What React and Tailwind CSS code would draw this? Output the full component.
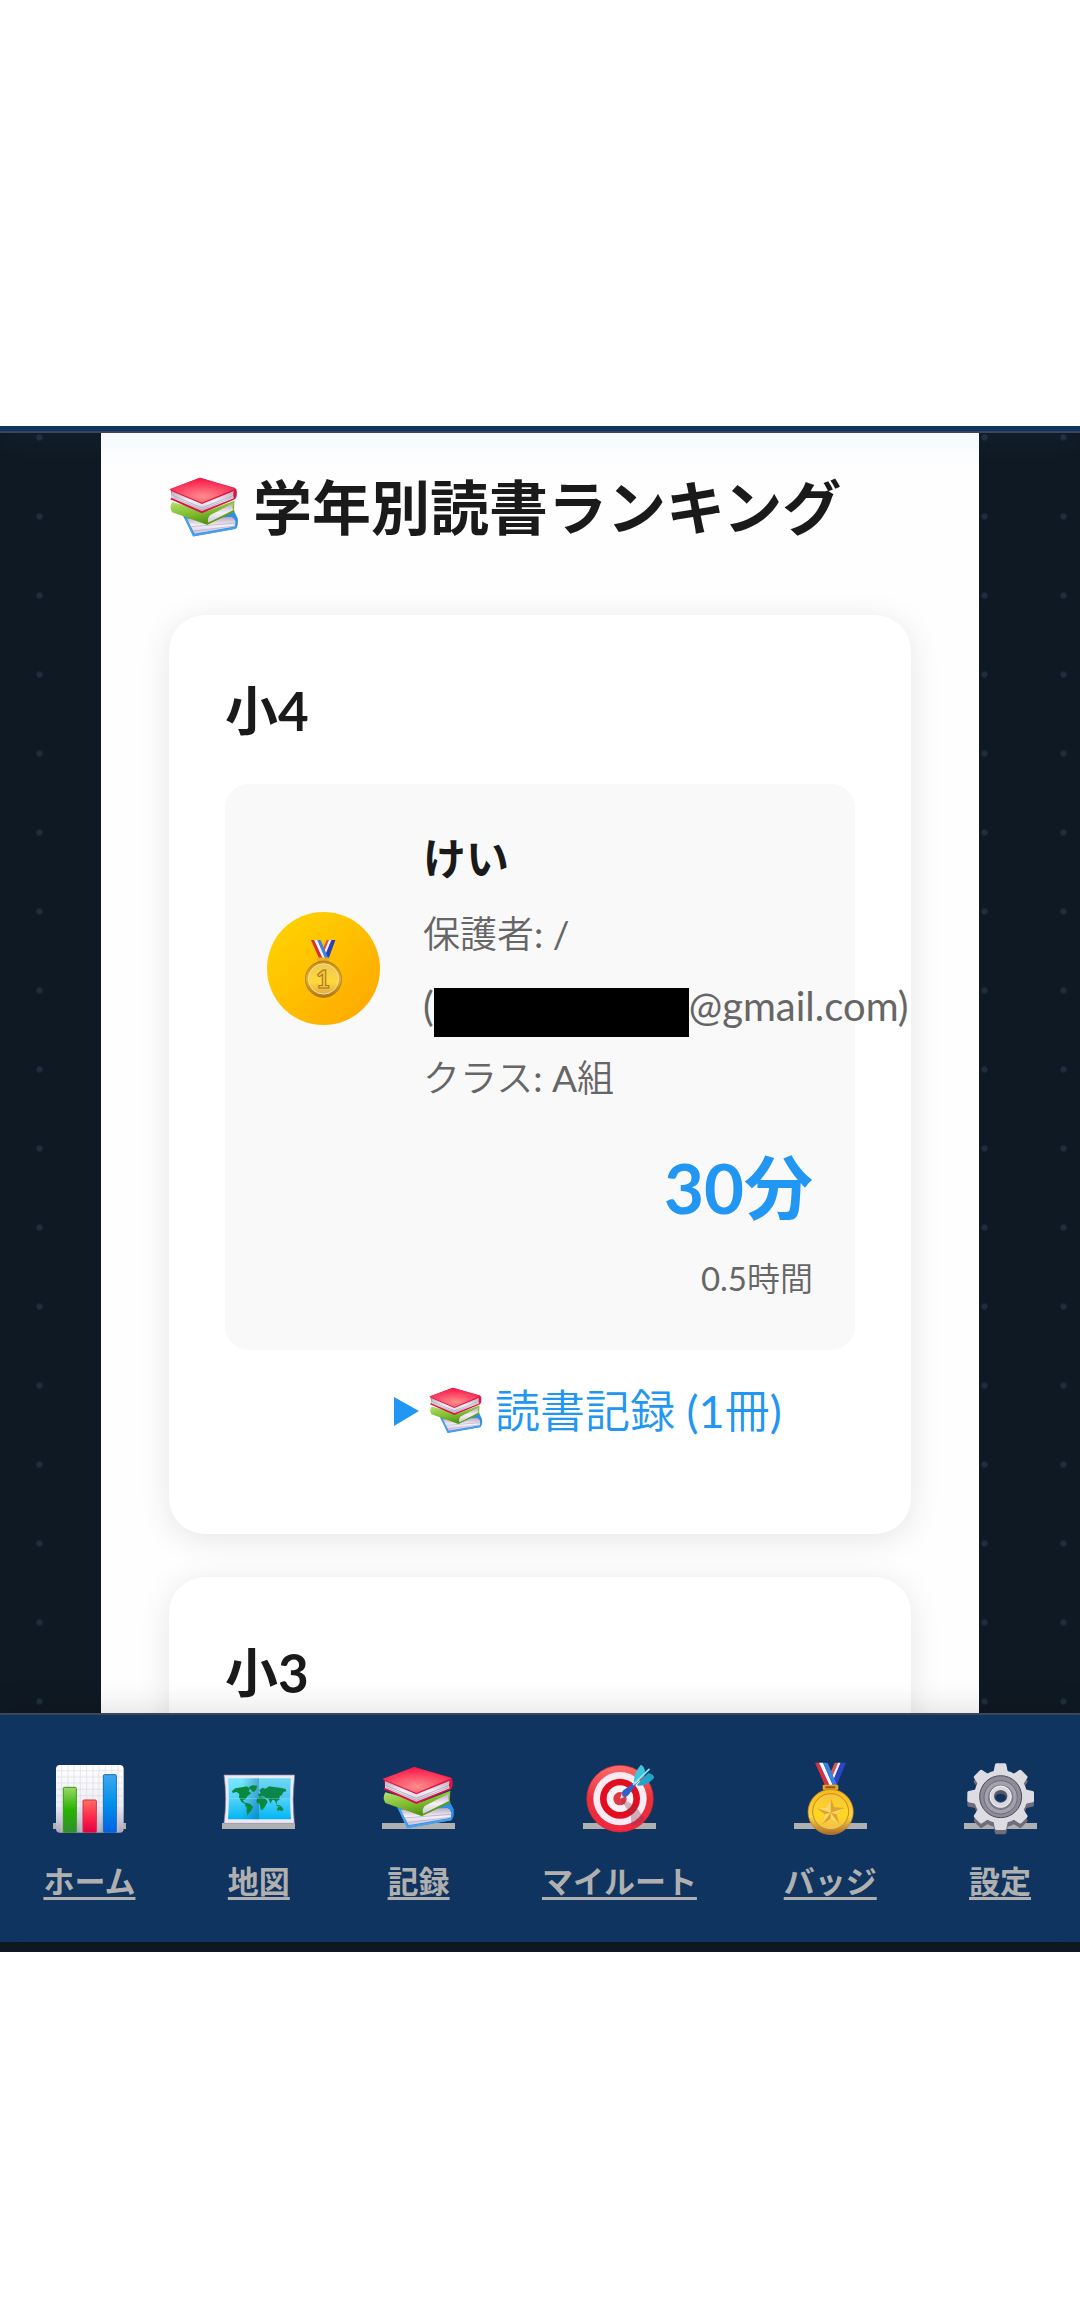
import React from "react";

const BooksIcon = ({ className }) => (
  <svg viewBox="0 0 219 219" className={className} aria-hidden="true">
    <defs>
      <radialGradient id="bookRed" cx="0.5" cy="0.75" r="0.7">
        <stop offset="0" stopColor="#ff8d8d" />
        <stop offset="1" stopColor="#f9194a" />
      </radialGradient>
      <linearGradient id="bookGreen" x1="0" y1="0" x2="0.5" y2="1">
        <stop offset="0" stopColor="#b9e474" />
        <stop offset="0.6" stopColor="#7cbb2c" />
        <stop offset="1" stopColor="#4d8f12" />
      </linearGradient>
      <linearGradient id="bookPages" x1="0" y1="0" x2="0" y2="1">
        <stop offset="0" stopColor="#b9aac0" />
        <stop offset="0.5" stopColor="#f5f0f8" />
        <stop offset="1" stopColor="#cfc4d8" />
      </linearGradient>
    </defs>
    {/* blue book */}
    <path d="M42 130 L205 122 L215 142 Q218 168 207 175 L76 199 Z" fill="#2f8ee6" />
    <path d="M56 143 L196 138 Q212 146 206 167 L80 190 Z" fill="url(#bookPages)" />
    <path d="M66 168 L208 157 M76 182 L206 166" stroke="#aaa2c4" strokeWidth="2" fill="none" />
    <path d="M52 140 L76 195 L208 172" stroke="#4aa3f0" strokeWidth="5" fill="none" />
    {/* green book */}
    <path d="M10 91 L118 120 L205 86 L203 122 L119 162 L10 123 Q0 108 10 91 Z" fill="url(#bookGreen)" />
    <path d="M128 132 L202 94 Q196 105 201 116 L124 156 Q118 145 128 132 Z" fill="url(#bookPages)" />
    <path d="M119 160 L205 119" stroke="#5e9e1b" strokeWidth="4" />
    {/* red book */}
    <path d="M2 51 L97 15 L205 46 Q214 50 212 64 Q213 80 203 84 L103 126 L4 82 L9 76 L7 56 Z" fill="#d8143f" />
    <path d="M9 57 L103 97 L203 56 Q199 68 203 79 L103 119 L9 78 Z" fill="url(#bookPages)" />
    <path d="M11 70 L103 109 L201 70 M14 77 L103 115 L200 76" stroke="#9d93ab" strokeWidth="2" fill="none" />
    <path d="M2 51 L97 15 L208 49 L103 93 Z" fill="url(#bookRed)" />
  </svg>
);

const ChartIcon = ({ className }) => (
  <svg viewBox="0 0 219 219" className={className} aria-hidden="true">
    <defs>
      <linearGradient id="chartPaper" x1="0" y1="0" x2="0" y2="1">
        <stop offset="0" stopColor="#ffffff" />
        <stop offset="0.6" stopColor="#efedf4" />
        <stop offset="1" stopColor="#aca5bb" />
      </linearGradient>
      <linearGradient id="barGreen" x1="0" y1="0" x2="0" y2="1">
        <stop offset="0" stopColor="#9bd76b" />
        <stop offset="0.5" stopColor="#27b400" />
        <stop offset="1" stopColor="#2f8f2c" />
      </linearGradient>
      <linearGradient id="barRed" x1="0" y1="0" x2="0" y2="1">
        <stop offset="0" stopColor="#ff7060" />
        <stop offset="0.5" stopColor="#ff2b4d" />
        <stop offset="1" stopColor="#e2003f" />
      </linearGradient>
      <linearGradient id="barBlue" x1="0" y1="0" x2="0" y2="1">
        <stop offset="0" stopColor="#3fa7f2" />
        <stop offset="0.5" stopColor="#0091ea" />
        <stop offset="1" stopColor="#0062e6" />
      </linearGradient>
    </defs>
    <rect x="9" y="9" width="203" height="203" rx="12" fill="url(#chartPaper)" />
    <path
      d="M26 10V211M45 10V211M63 10V211M82 10V211M101 10V211M120 10V211M138 10V211M157 10V211M176 10V211M195 10V211M10 26H211M10 45H211M10 63H211M10 82H211M10 101H211M10 120H211M10 138H211M10 157H211M10 176H211"
      stroke="#cfd3e0"
      strokeWidth="2"
      opacity="0.7"
    />
    <rect x="31" y="76" width="39" height="135" rx="3" fill="url(#barGreen)" stroke="#359a1c" strokeWidth="3" />
    <rect x="90" y="114" width="40" height="97" rx="3" fill="url(#barRed)" stroke="#d92d45" strokeWidth="3" />
    <rect x="151" y="38" width="39" height="173" rx="3" fill="url(#barBlue)" stroke="#126fb8" strokeWidth="3" />
  </svg>
);

const MapIcon = ({ className }) => (
  <svg viewBox="0 0 219 219" className={className} aria-hidden="true">
    <defs>
      <linearGradient id="mapSea" x1="0" y1="0" x2="0" y2="1">
        <stop offset="0" stopColor="#7be9ff" />
        <stop offset="0.5" stopColor="#4fd2fb" />
        <stop offset="1" stopColor="#00b4f5" />
      </linearGradient>
      <linearGradient id="mapFold" x1="0" y1="0" x2="1" y2="0">
        <stop offset="0" stopColor="#1a5d9c" stopOpacity="0" />
        <stop offset="1" stopColor="#1a5d9c" stopOpacity="0.45" />
      </linearGradient>
    </defs>
    <path d="M6 39 H218 Q209 110 217 184 H6 Q16 110 6 39 Z" fill="#ece9f5" stroke="#8e87a3" strokeWidth="2" />
    <path d="M18 49 H207 Q202 110 207 172 H18 Q23 110 18 49 Z" fill="url(#mapSea)" />
    <rect x="60" y="49" width="51" height="123" fill="url(#mapFold)" />
    <g fill="#078a3c">
      <path d="M30 87 L40 79 L60 76 L74 73 L84 80 L80 88 L88 94 L76 103 L71 112 L62 114 L68 122 L76 124 L70 127 L58 119 L51 106 L52 96 L44 90 L32 93 Z" />
      <path d="M80 75 L92 70 L106 71 L102 84 L94 91 L88 85 Z" />
      <path d="M72 122 L84 126 L93 134 L87 147 L80 154 L77 161 L73 148 L75 138 L69 130 Z" />
      <path d="M111 104 L108 97 L116 93 L112 85 L121 77 L130 80 L142 73 L156 75 L174 77 L191 81 L193 88 L184 90 L180 99 L173 103 L172 113 L164 118 L166 128 L157 115 L151 113 L146 125 L140 112 L132 108 L124 103 Z" />
      <path d="M105 109 L116 105 L129 108 L137 119 L130 132 L122 144 L116 143 L113 126 L103 121 Z" />
      <path d="M162 129 L176 130 L168 134 Z" />
      <path d="M166 138 L176 131 L184 140 L181 148 L173 145 L165 146 Z" />
    </g>
    <path d="M15 110 H213" stroke="#a9effc" strokeWidth="2" opacity="0.6" />
    <rect x="111" y="49" width="94" height="61" fill="#1f6fae" opacity="0.14" />
  </svg>
);

const TargetIcon = ({ className }) => (
  <svg viewBox="0 0 219 219" className={className} aria-hidden="true">
    <defs>
      <linearGradient id="targetRed" x1="0" y1="0" x2="0" y2="1">
        <stop offset="0" stopColor="#ff6b6b" />
        <stop offset="0.5" stopColor="#e9303a" />
        <stop offset="1" stopColor="#f3263d" />
      </linearGradient>
    </defs>
    <circle cx="111" cy="110" r="100" fill="url(#targetRed)" stroke="#c52b3c" strokeWidth="2" />
    <circle cx="111" cy="110" r="80" fill="#f8ebf3" />
    <circle cx="111" cy="110" r="60" fill="#e20d1f" />
    <circle cx="111" cy="110" r="40" fill="#fbf2f6" />
    <circle cx="111" cy="110" r="20" fill="#e23845" />
    <path d="M112 112 Q140 118 163 140 L186 172 Q166 190 146 191 L143 158 Z" fill="#7c3a4c" opacity="0.35" />
    <path d="M111 110 L118 91 L130 102 Z" fill="#e7f0fa" />
    <path d="M117 92 Q118 86 125 82 L152 64 L158 70 L137 98 Q127 109 118 102 Z" fill="#2f5fca" />
    <path d="M153 62 Q150 34 174 8 Q183 12 186 27 L183 42 Z" fill="#3fc6dd" />
    <path d="M161 70 Q188 76 213 48 Q214 38 197 33 L186 42 Z" fill="#1fa6cc" />
    <path d="M152 67 L198 22" stroke="#8deaf5" strokeWidth="5" strokeLinecap="round" />
    <path d="M155 70 L192 34" stroke="#16789e" strokeWidth="2" />
  </svg>
);

const MedalIcon = ({ className }) => (
  <svg viewBox="0 0 219 219" className={className} aria-hidden="true">
    <defs>
      <linearGradient id="medalRim" x1="0" y1="0" x2="0" y2="1">
        <stop offset="0" stopColor="#f6b81a" />
        <stop offset="0.6" stopColor="#ffd541" />
        <stop offset="1" stopColor="#a86a2c" />
      </linearGradient>
      <linearGradient id="medalFace" x1="0" y1="0" x2="0" y2="1">
        <stop offset="0" stopColor="#f5c53a" />
        <stop offset="0.6" stopColor="#ffd91f" />
        <stop offset="1" stopColor="#f0be55" />
      </linearGradient>
    </defs>
    <path d="M122 2 H132 L112 50 L105 42 Z" fill="#d9534f" />
    <path d="M132 2 H140 L117 58 L112 50 Z" fill="#f4eef8" />
    <path d="M140 2 H156 L128 70 L117 58 Z" fill="#2c45c4" />
    <path d="M63 2 H75 L108 73 H94 Z" fill="#d93040" />
    <path d="M75 2 H87 L118 73 H108 Z" fill="#fbf8ff" />
    <path d="M87 2 H101 L130 73 H118 Z" fill="#3a80e2" />
    <rect x="86" y="68" width="47" height="16" rx="4" fill="#e6a422" />
    <rect x="94" y="73" width="30" height="6" rx="2" fill="#8a5b17" />
    <circle cx="110" cy="150" r="68" fill="url(#medalRim)" stroke="#ad7a28" strokeWidth="2" />
    <circle cx="110" cy="149" r="54" fill="url(#medalFace)" stroke="#c58a1e" strokeWidth="3" />
    <path d="M110 108 L121 136 L152 138 L128 157 L136 187 L110 171 L84 187 L92 157 L68 138 L99 136 Z" fill="#e0a526" />
    <path d="M110 108 L110 152 L99 136 Z M152 138 L110 152 L128 157 Z M136 187 L110 152 L110 171 Z M84 187 L110 152 L92 157 Z M68 138 L110 152 L99 136 Z" fill="#f8d670" />
  </svg>
);

const TEETH = [0, 45, 90, 135, 180, 225, 270, 315];

const GearShape = ({ cy, fill }) => (
  <g fill={fill}>
    <circle cx="110" cy={cy} r="80" />
    {TEETH.map((angle) => (
      <path
        key={angle}
        d={`M88 ${cy - 72} L93 ${cy - 96} Q94 ${cy - 100} 98 ${cy - 100} H122 Q126 ${cy - 100} 127 ${cy - 96} L132 ${cy - 72} Z`}
        transform={`rotate(${angle} 110 ${cy})`}
      />
    ))}
  </g>
);

const GearIcon = ({ className }) => (
  <svg viewBox="0 0 219 219" className={className} aria-hidden="true">
    <GearShape cy={117} fill="#716c7c" />
    <GearShape cy={104} fill="#dddce2" />
    <circle cx="110" cy="104" r="63" fill="#8e8c98" stroke="#4c4a56" strokeWidth="3" />
    <circle cx="110" cy="106" r="50" fill="#a3a1ad" stroke="#6e6c7a" strokeWidth="3" />
    <circle cx="110" cy="106" r="38" fill="#7d7b88" />
    <circle cx="110" cy="104" r="32" fill="#d9d8e0" stroke="#f4f4f8" strokeWidth="3" />
    <ellipse cx="110" cy="103" rx="20" ry="19" fill="#5a5867" />
    <ellipse cx="110" cy="107" rx="16" ry="12" fill="#0f3460" />
  </svg>
);

const FirstPlaceIcon = ({ className }) => (
  <svg viewBox="0 0 112 180" className={className} aria-hidden="true">
    <defs>
      <linearGradient id="firstRim" x1="0" y1="0" x2="0" y2="1">
        <stop offset="0" stopColor="#c08a1e" />
        <stop offset="0.5" stopColor="#e3b238" />
        <stop offset="1" stopColor="#a87420" />
      </linearGradient>
      <linearGradient id="firstFace" x1="0" y1="0" x2="0" y2="1">
        <stop offset="0" stopColor="#edc85a" />
        <stop offset="0.6" stopColor="#ffd83a" />
        <stop offset="1" stopColor="#e0ad46" />
      </linearGradient>
    </defs>
    <path d="M66 2 H73 L57 40 L52 32 Z" fill="#e2503f" />
    <path d="M73 2 H80 L61 48 L57 40 Z" fill="#f4eef8" />
    <path d="M80 2 H92 L71 60 L61 48 Z" fill="#2a3fb8" />
    <path d="M18 2 H28 L54 58 H43 Z" fill="#d52f3c" />
    <path d="M28 2 H37 L61 58 H54 Z" fill="#fbf8ff" />
    <path d="M37 2 H47 L71 58 H61 Z" fill="#3f80e0" />
    <rect x="37" y="55" width="37" height="12" rx="3" fill="#e9ac25" />
    <circle cx="56" cy="121" r="55" fill="url(#firstRim)" stroke="#a5731c" strokeWidth="2" />
    <circle cx="56" cy="120" r="46" fill="url(#firstFace)" stroke="#fbe089" strokeWidth="3" />
    <text
      x="55"
      y="147"
      textAnchor="middle"
      fontFamily="Lato, sans-serif"
      fontWeight="900"
      fontSize="74"
      fill="#f0c23a"
      stroke="#a8741a"
      strokeWidth="3"
    >
      1
    </text>
  </svg>
);

const grades = [
  {
    grade: "小4",
    students: [
      {
        name: "けい",
        className: "A組",
        emailDomain: "@gmail.com",
        minutes: 30,
        hours: "0.5",
        books: 1,
      },
    ],
  },
  { grade: "小3", students: [] },
];

const navItems = [
  { label: "ホーム", href: "#home", Icon: ChartIcon },
  { label: "地図", href: "#map", Icon: MapIcon },
  { label: "記録", href: "#records", Icon: BooksIcon },
  { label: "マイルート", href: "#route", Icon: TargetIcon },
  { label: "バッジ", href: "#badges", Icon: MedalIcon },
  { label: "設定", href: "#settings", Icon: GearIcon },
];

// Thin Japanese strokes next to regular Latin letters
const THIN =
  "font-['Lato','Noto_Sans_CJK_JP_DemiLight','Noto_Sans_CJK_JP_Light','Noto_Sans_CJK_JP',sans-serif]";

const StudentRow = ({ student }) => (
  <>
    <div className="rounded-3xl bg-[#f9f9f9] px-[42px] pt-[39px] pb-[42px]">
      <div className="flex items-center gap-[43px]">
        <div className="flex size-[113px] shrink-0 items-center justify-center rounded-full bg-linear-135 from-[#ffd700] to-[#ffa500]">
          <FirstPlaceIcon className="h-[60px] w-[37px]" />
        </div>
        <div className="min-w-0 text-[37px] leading-[72px] whitespace-nowrap text-[#666]">
          <h3 className="mb-[3px] text-[43px] leading-[72px] font-bold text-[#1a1a1a]">
            {student.name}
          </h3>
          <p className={THIN}>保護者: /</p>
          <p className="flex items-center text-[40px] leading-[72px]">
            (<span className="mt-3 h-[49px] w-[255px] shrink-0 bg-black"></span>
            {student.emailDomain})
          </p>
          <p className={THIN}>クラス: {student.className}</p>
        </div>
      </div>
      <div className="mt-6 text-right">
        <p className="text-[69px] leading-[100px] font-bold text-[#2196f3]">
          {student.minutes}分
        </p>
        <p className={`mt-[10px] text-[33px] leading-[60px] text-[#666] ${THIN}`}>
          {student.hours}時間
        </p>
      </div>
    </div>
    <details className="mt-6 pl-[169px]">
      <summary
        className={`flex cursor-pointer list-none items-center text-[45px] leading-[74px] text-[#2196f3] ${THIN}`}
      >
        <svg viewBox="0 0 25 29" className="mr-[10px] h-[29px] w-[25px]" aria-hidden="true">
          <path d="M0 0 L25 14 L0 29 Z" fill="#2196f3" />
        </svg>
        <BooksIcon className="mr-3 size-[54px]" />
        読書記録 ({student.books}冊)
      </summary>
    </details>
  </>
);

const GradeCard = ({ grade, students }) => (
  <section className="rounded-[36px] bg-white px-14 pt-[62px] pb-[86px] shadow-[0_5px_32px_rgba(0,0,0,0.1)]">
    <h2 className="mb-[39px] text-[53px] leading-[68px] font-bold">{grade}</h2>
    {students.map((student) => (
      <StudentRow key={student.name} student={student} />
    ))}
  </section>
);

const BottomNav = () => (
  <nav className="relative z-10 flex shrink-0 justify-around border-t-2 border-[#3d4659] bg-[#0f3460] pt-[47px] pb-[41px] shadow-[0_-4px_30px_rgba(0,0,0,0.12)]">
    {navItems.map(({ label, href, Icon }) => (
      <a
        key={label}
        href={href}
        className="flex flex-col items-center text-[31px] leading-10 font-bold text-[#b0b0b0]"
      >
        <span className="mb-8 border-b-[6px] border-[#b0b0b0]">
          <Icon className="-mb-3 size-[73px]" />
        </span>
        <span className="underline decoration-3 underline-offset-4 [text-decoration-skip-ink:none]">
          {label}
        </span>
      </a>
    ))}
  </nav>
);

const DOTS =
  "flex-1 bg-[radial-gradient(circle_at_center,#1f2f40_2px,transparent_4px)] bg-size-[79px_79px]";

export default function App() {
  return (
    <div
      lang="ja"
      className="h-screen bg-white pt-[426px] pb-[364px] font-['Lato','Noto_Sans_CJK_JP',sans-serif] text-[#1a1a1a]"
    >
      <div className="flex h-full flex-col overflow-hidden bg-[#0f1923] pb-[10px]">
        <header className="relative z-10 h-[7px] shrink-0 border-b-2 border-[#3d4659] bg-[#0f3460] shadow-[0_8px_24px_rgba(60,150,220,0.16)]"></header>
        <div className="flex min-h-0 flex-1 overflow-hidden">
          <div className={`${DOTS} bg-position-[0px_-35px]`}></div>
          <main className="w-[878px] bg-[#fefefe] px-[68px] pt-[35px]">
            <h1 className="mb-[67px] flex items-center gap-[14px] text-[59px] leading-[80px] font-bold whitespace-nowrap">
              <BooksIcon className="size-[70px]" />
              学年別読書ランキング
            </h1>
            <div className="flex flex-col gap-[43px]">
              {grades.map((item) => (
                <GradeCard key={item.grade} {...item} />
              ))}
            </div>
          </main>
          <div className={`${DOTS} bg-position-[-34px_-35px]`}></div>
        </div>
        <BottomNav />
      </div>
    </div>
  );
}
